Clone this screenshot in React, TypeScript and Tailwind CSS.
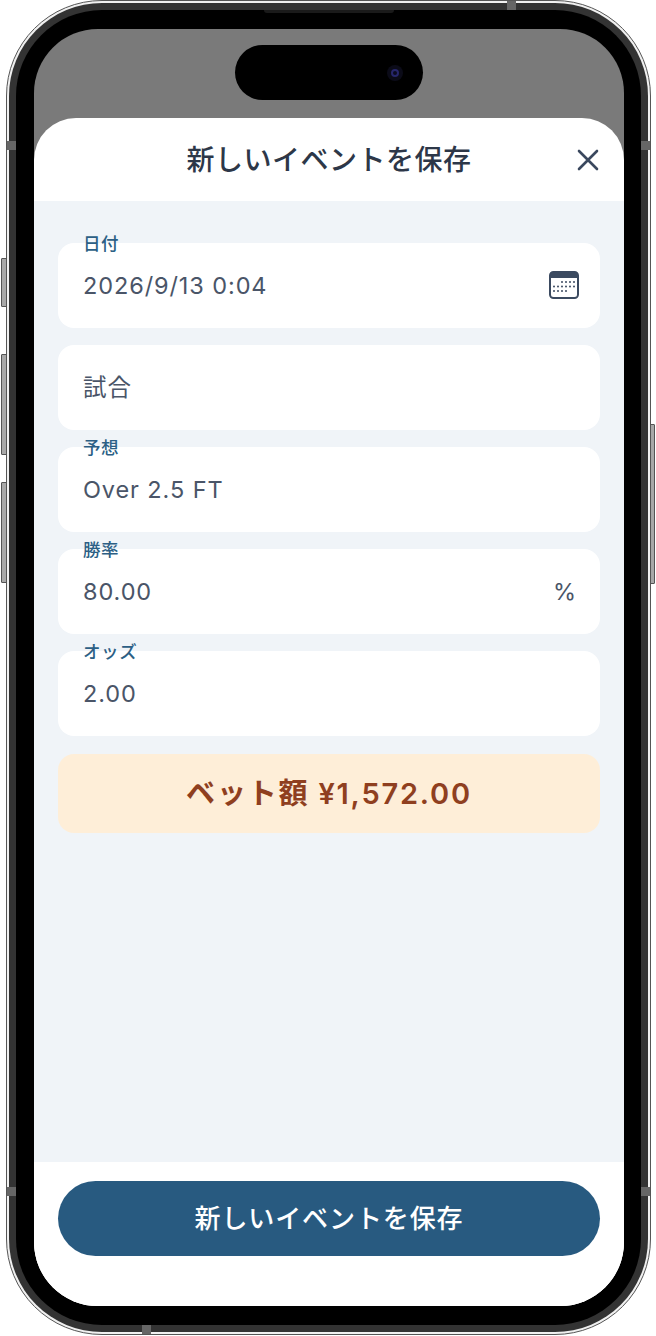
const fontStack = "font-['Inter','Noto_Sans_CJK_JP',sans-serif]";

function CalendarIcon() {
  const dots = [
    [14, 11], [18, 11], [22, 11], [26, 11],
    [6, 15.5], [10, 15.5], [14, 15.5], [18, 15.5], [22, 15.5], [26, 15.5],
    [6, 20], [10, 20], [14, 20], [18, 20],
  ];
  return (
    <svg width="30" height="28" viewBox="0 0 30 28" fill="none" className="-mt-[2px]">
      <rect x="1" y="1" width="28" height="26" rx="3.5" fill="#fff" stroke="#3b4a60" strokeWidth="2" />
      <path d="M1 4.5A3.5 3.5 0 0 1 4.5 1h21A3.5 3.5 0 0 1 29 4.5V7H1z" fill="#3b4a60" />
      {dots.map(([x, y]) => (
        <circle key={`${x}-${y}`} cx={x - 1} cy={y} r="1" fill="#3b4a60" />
      ))}
    </svg>
  );
}

function CloseIcon() {
  return (
    <svg width="22" height="22" viewBox="0 0 22 22" fill="none" stroke="#3a485e" strokeWidth="2.6" strokeLinecap="round">
      <path d="M2 2l18 18M20 2L2 20" />
    </svg>
  );
}

function Field({ label, value, suffix }: { label?: string; value: string; suffix?: React.ReactNode }) {
  return (
    <div className="relative flex h-[85px] items-center justify-between rounded-[16px] bg-white pl-[25px] pr-[21px]">
      {label && (
        <span className="absolute left-[25px] top-[-9px] text-[17.5px] leading-[20px] font-medium tracking-[0.6px] text-[#2c5f85]">
          {label}
        </span>
      )}
      <span className="text-[23.5px] leading-[30px] tracking-[0.9px] text-[#4a5568]">{value}</span>
      {suffix}
    </div>
  );
}

export default function App() {
  return (
    <div className={`relative h-[1336px] w-[656px] overflow-hidden bg-white pb-[1px] pl-[6px] pr-[5px] ${fontStack}`}>
      {/* side buttons */}
      <div className="absolute left-[1px] top-[258px] h-[49px] w-[6px] rounded-l-[1px] border border-[#555] bg-[#a8a8a8]" />
      <div className="absolute left-[1px] top-[354px] h-[101px] w-[6px] rounded-l-[1px] border border-[#555] bg-[#a8a8a8]" />
      <div className="absolute left-[1px] top-[482px] h-[101px] w-[6px] rounded-l-[1px] border border-[#555] bg-[#a8a8a8]" />
      <div className="absolute right-[1px] top-[424px] h-[160px] w-[6px] rounded-r-[1px] border border-[#555] bg-[#a8a8a8]" />

      {/* device shell */}
      <div className="relative h-full rounded-[96px] border border-[#555] bg-[#f0f0f0] p-[2px]">
        <div className="h-full rounded-[93px] bg-[#333] p-[7px]">
          <div className="relative h-full rounded-[86px] bg-black pb-[19px] pl-[18px] pr-[17px] pt-[19px]">
            <div className="absolute left-[248px] top-[0px] h-[3px] w-[130px] rounded-b-[3px] bg-[#1a1a1a]" />

            <div className="relative flex h-full flex-col overflow-hidden rounded-[64px] bg-[#7a7a7a]">
              {/* dynamic island */}
              <div className="absolute left-[201px] top-[16px] flex h-[55px] w-[188px] items-center justify-end rounded-full bg-black pr-[20px]">
                <div className="flex h-[16px] w-[16px] items-center justify-center rounded-full bg-[#0b0b18]">
                  <div className="h-[8px] w-[8px] rounded-full border-2 border-[#26266b] bg-[#0a0a20]" />
                </div>
              </div>

              <div className="mt-[89px] flex min-h-0 flex-1 flex-col overflow-hidden rounded-t-[42px] bg-white">
                <header className="relative flex h-[83px] shrink-0 items-center justify-center pt-[1px]">
                  <h1 className="text-[28px] leading-[36px] font-medium tracking-[0.5px] text-[#2d3748]">
                    新しいイベントを保存
                  </h1>
                  <div className="absolute right-[25px] top-[31px]">
                    <CloseIcon />
                  </div>
                </header>

                <main className="flex flex-1 flex-col gap-[17px] bg-[#f0f4f8] px-[24px] pt-[42px]">
                  <Field label="日付" value="2026/9/13 0:04" suffix={<CalendarIcon />} />
                  <Field value="試合" />
                  <Field label="予想" value="Over 2.5 FT" />
                  <Field
                    label="勝率"
                    value="80.00"
                    suffix={<span className="mr-[3px] text-[23.5px] leading-[30px] text-[#4a5568]">%</span>}
                  />
                  <Field label="オッズ" value="2.00" />
                  <div className="mt-[1px] flex h-[79px] items-center justify-center rounded-[16px] bg-[#feeed8] pt-[1px]">
                    <span className="text-[29px] leading-[36px] font-semibold tracking-[1.8px] text-[#8f3f1f]">
                      ベット額 ¥1,572.00
                    </span>
                  </div>
                </main>

                <footer className="flex h-[144px] shrink-0 flex-col bg-white px-[24px] pt-[19px]">
                  <button className="flex h-[75px] items-center justify-center rounded-full bg-[#285a80] text-[26px] leading-[32px] font-medium tracking-[0.9px] text-white">
                    新しいイベントを保存
                  </button>
                </footer>
              </div>
            </div>
          </div>
        </div>

        {/* antenna bands */}
        <div className="absolute left-[0px] top-[140px] h-[9px] w-[9px] bg-[#666]" />
        <div className="absolute right-[0px] top-[140px] h-[9px] w-[9px] bg-[#666]" />
        <div className="absolute left-[0px] top-[1186px] h-[9px] w-[9px] bg-[#666]" />
        <div className="absolute right-[0px] top-[1186px] h-[9px] w-[9px] bg-[#666]" />
        <div className="absolute bottom-[0px] left-[135px] h-[9px] w-[9px] bg-[#666]" />
        <div className="absolute left-[500px] top-[0px] h-[9px] w-[9px] bg-[#666]" />
      </div>
    </div>
  );
}
